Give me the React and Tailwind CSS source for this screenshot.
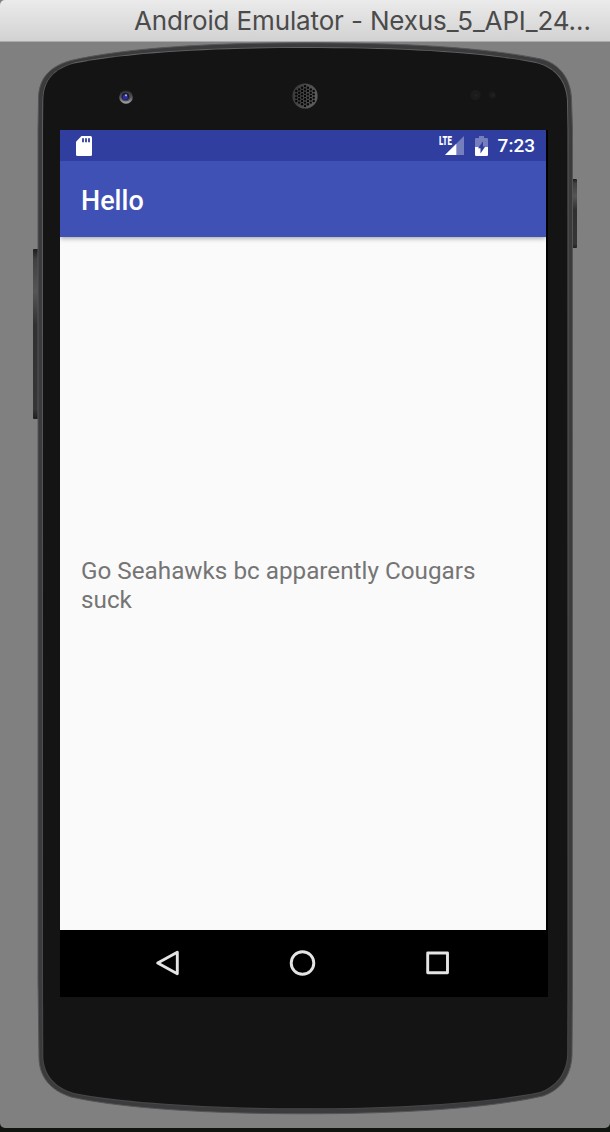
import React from "react";

const BODY =
  "M38 130 L38.5 98 C39 77 51 66 71 60.5 C125 48 210 42.8 305 42.8 C400 42.8 482 47 541 59 C560 64 571 79 571.5 100 L572.5 130 V980 L572 1055 C571 1077 560 1090 543 1096 C485 1109 395 1113.8 305 1113.8 C215 1113.8 125 1109 71 1097 C50 1090 39.5 1077 39 1058 L38 980 Z";
const FACE =
  "M43 130 L43.3 99 C44 80 54 69 74 63.5 C130 52.5 210 48 305 48 C400 48 480 52 536 63 C556 68 566.5 82 567 102 L567.5 130 V980 L567.2 1055 C566 1074 556 1086 540 1092 C484 1103 395 1108.3 305 1108.3 C215 1108.3 125 1103 74 1093 C54 1087 44 1074 43.3 1057 L43 980 Z";

function speakerHoles() {
  const holes = [];
  for (let c = -4; c <= 4; c++) {
    for (let r = -4; r <= 4; r++) {
      const x = c * 2.9;
      const y = r * 3.3 + (c % 2 ? 1.65 : 0);
      if (x * x + y * y < 128) holes.push([305 + x, 96 + y]);
    }
  }
  return holes;
}

function DeviceShell() {
  return (
    <svg className="absolute inset-0" width="610" height="1132" viewBox="0 0 610 1132" aria-hidden="true">
      <defs>
        <linearGradient id="key" x1="0" y1="0" x2="0" y2="1">
          <stop offset="0" stopColor="#1c1c1c" />
          <stop offset=".06" stopColor="#404040" />
          <stop offset=".25" stopColor="#555" />
          <stop offset=".45" stopColor="#303030" />
          <stop offset=".94" stopColor="#363636" />
          <stop offset="1" stopColor="#202020" />
        </linearGradient>
        <linearGradient id="rim" x1="0" y1="0" x2="0" y2="1">
          <stop offset="0" stopColor="#626262" />
          <stop offset=".25" stopColor="#5b5b5d" />
          <stop offset=".65" stopColor="#505052" />
          <stop offset="1" stopColor="#474747" />
        </linearGradient>
        <linearGradient id="lens" x1="0" y1="0" x2="0" y2="1">
          <stop offset="0" stopColor="#222" />
          <stop offset=".5" stopColor="#555" />
          <stop offset="1" stopColor="#aaa" />
        </linearGradient>
        <linearGradient id="grille" x1="0" y1="0" x2="1" y2=".3">
          <stop offset="0" stopColor="#343434" />
          <stop offset="1" stopColor="#5c5c5c" />
        </linearGradient>
      </defs>
      <rect x="33" y="249" width="6" height="170" rx="1" fill="url(#key)" />
      <rect x="571" y="179" width="6" height="69" rx="1" fill="url(#key)" />
      <path d={BODY} fill="#3b3b3d" />
      <path d={BODY} fill="none" stroke="#555557" strokeWidth="1" />
      <path d={FACE} fill="#141414" stroke="url(#rim)" strokeWidth="1.8" />
      <path d={FACE} fill="#141414" />
      <circle cx="126" cy="97" r="6.8" fill="url(#lens)" />
      <circle cx="125.7" cy="96.5" r="4.8" fill="#4a4a50" />
      <circle cx="125.5" cy="96.3" r="3.8" fill="#1c1c34" />
      <circle cx="125.2" cy="97" r="2.6" fill="#2c2ca8" />
      <circle cx="126" cy="95.3" r="1.1" fill="#b0b0d0" />
      <circle cx="305" cy="96" r="12.6" fill="url(#grille)" />
      {speakerHoles().map(([x, y]) => (
        <circle key={`${x}-${y}`} cx={x} cy={y} r="1.2" fill="#060606" />
      ))}
      <circle cx="475.5" cy="95" r="5.3" fill="#1b1b1b" />
      <circle cx="476" cy="95.5" r="1.4" fill="#222" />
      <circle cx="492.5" cy="95" r="3.6" fill="#1b1b1b" />
      <circle cx="493" cy="95.3" r="1.2" fill="#232323" />
    </svg>
  );
}

function SdCardIcon() {
  return (
    <svg width="16" height="20" viewBox="0 0 16 20" aria-hidden="true">
      <path d="M5.5 0H14.5Q16 0 16 1.5V18.5Q16 20 14.5 20H1.5Q0 20 0 18.5V5.7Z" fill="#fff" />
      <path d="M6 2.3h2v4H6zM9 2.3h2v4H9zM12 2.3h2v4h-2z" fill="#4350a5" />
    </svg>
  );
}

function SignalIcon() {
  return (
    <span className="relative block h-5 w-6">
      <svg width="24" height="20" viewBox="0 0 24 20" aria-hidden="true">
        <path d="M24 0V19H5Z" fill="#767fbe" />
        <path d="M16.3 7.7V19H5Z" fill="#fff" />
      </svg>
      <span className="absolute -left-px -top-px origin-left scale-x-[.58] text-[13.5px] leading-[11px] font-black">LTE</span>
    </span>
  );
}

function BatteryIcon() {
  return (
    <svg width="13" height="20" viewBox="0 0 13 20" aria-hidden="true">
      <path d="M4 0H9V2H11.8Q13 2 13 3.2V11H0V3.2Q0 2 1.2 2H4Z" fill="#767fbe" />
      <path d="M0 11H13V18.8Q13 20 11.8 20H1.2Q0 20 0 18.8Z" fill="#fff" />
      <path d="M8 5.2V10.6H10.2L5.5 17.5V12.3H3Z" fill="#303f9f" />
    </svg>
  );
}

export default function App() {
  return (
    <div className="h-[1132px] w-[610px] overflow-hidden bg-[#11150f] font-['Roboto',sans-serif]">
      <div className="relative flex h-[1128px] flex-col overflow-hidden rounded-b-[5px] bg-[#808080]">
        <DeviceShell />
        <header className="relative h-[42px] shrink-0 rounded-tl-[5px] border-b border-[#aaa] bg-linear-to-b from-[#ebebeb] to-[#d2d2d2] pl-[134px]">
          <h1 className="text-[26px] leading-[42px] font-normal whitespace-nowrap text-[#4b4b4b] font-['Inter',sans-serif] tracking-[-.14px]">
            Android Emulator - Nexus_5_API_24…
          </h1>
        </header>
        <main className="relative mt-[88px] ml-[60px] flex h-[867px] w-[488px] shrink-0 flex-col bg-black">
          <div className="flex h-[800px] w-[486px] flex-col bg-[#fafafa]">
            <div className="flex h-[31px] shrink-0 items-center bg-[#303f9f] pr-[11px] pl-4 text-white">
              <SdCardIcon />
              <div className="ml-auto flex items-center">
                <SignalIcon />
                <span className="mr-2.5 ml-[11px]"><BatteryIcon /></span>
                <span className="text-[19px] leading-[31px] font-medium">7:23</span>
              </div>
            </div>
            <div className="flex h-[76px] shrink-0 items-center bg-[#3f51b5] pt-1 pl-[21px] shadow-[0_1px_5px_rgba(0,0,0,.4)] [clip-path:inset(0_0_-8px_0)]">
              <h2 className="text-[27px] leading-8 font-medium text-white">Hello</h2>
            </div>
            <div className="flex flex-1 items-center px-[21px] pt-1">
              <p className="text-[24.25px] leading-[28.4px] text-[#757575]">Go Seahawks bc apparently Cougars suck</p>
            </div>
          </div>
          <nav className="flex flex-1 items-center pl-[95px] text-[#e4e4e4]">
            <svg width="295" height="28" viewBox="0 0 295 28" fill="none" stroke="currentColor" strokeWidth="2.9" strokeLinejoin="round" aria-hidden="true">
              <path d="M22.3 2.3V23.8L2.7 13Z" />
              <circle cx="147.5" cy="13" r="11.3" />
              <rect x="272.7" y="3" width="19.8" height="19.8" />
            </svg>
          </nav>
        </main>
      </div>
    </div>
  );
}
